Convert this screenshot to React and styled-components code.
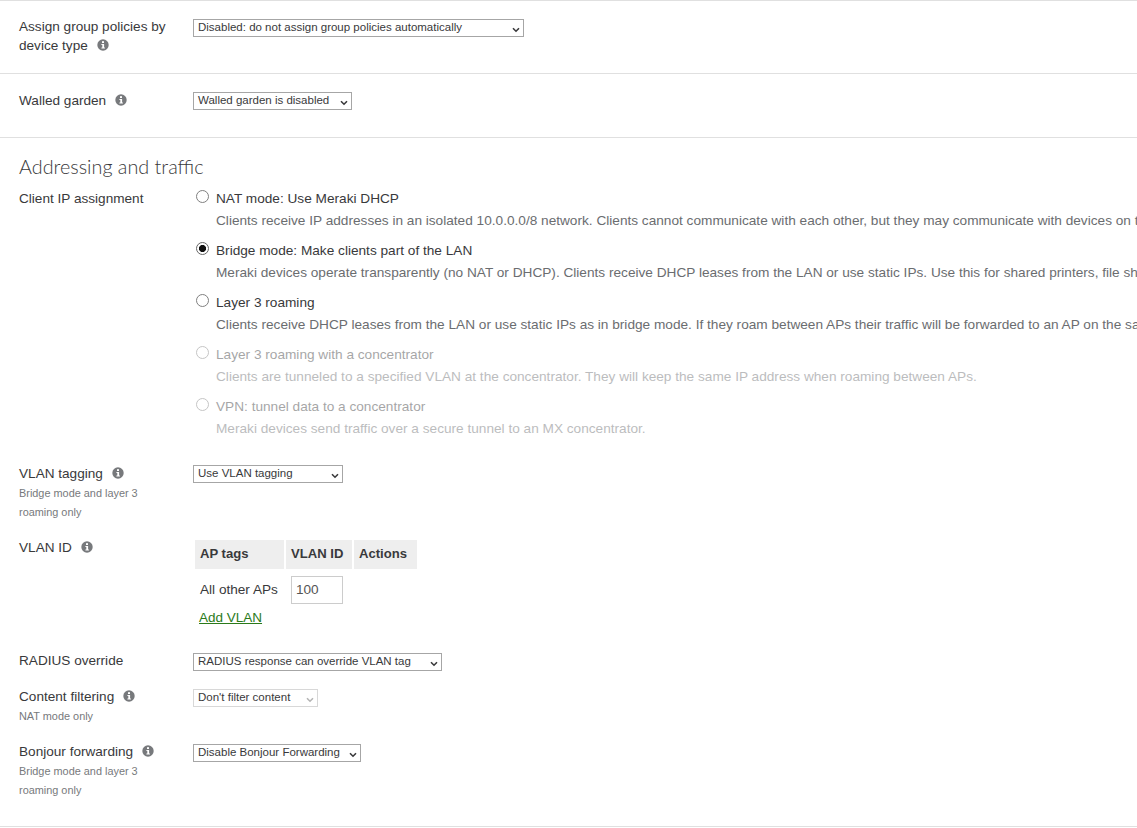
import React from 'react'
import styled, { createGlobalStyle } from 'styled-components'

const GlobalStyle = createGlobalStyle`
	html, body {
		margin: 0;
		padding: 0;
		background: #fff;
	}

	body {
		font-family: "Liberation Sans", Arial, sans-serif;
		font-size: 13.65px;
		color: #39393b;
		overflow: hidden;
	}
`

const InfoIcon = () => (
	<Info viewBox="0 0 12 12" aria-hidden="true">
		<circle cx="6" cy="6" r="5.7" fill="#77797c" />
		<rect x="5" y="2.2" width="2" height="1.8" fill="#fff" />
		<path d="M4.4 5h2.7v3.4h.8v1H4.4v-1h.9V6h-.9z" fill="#fff" />
	</Info>
)

const Select = ({ width, top, disabled, children }) => (
	<SelectBox $width={width} $top={top} $disabled={disabled}>
		<span>{children}</span>
		<svg width="8" height="6" viewBox="0 0 8 6" aria-hidden="true">
			<path d="M1 1.2l3 3 3-3" fill="none" stroke={disabled ? '#b5b5b5' : '#39393b'} strokeWidth="1.6" />
		</svg>
	</SelectBox>
)

const options = [
	{
		title: 'NAT mode: Use Meraki DHCP',
		text: 'Clients receive IP addresses in an isolated 10.0.0.0/8 network. Clients cannot communicate with each other, but they may communicate with devices on the wired LAN if the SSID firewall settings permit.',
	},
	{
		title: 'Bridge mode: Make clients part of the LAN',
		text: 'Meraki devices operate transparently (no NAT or DHCP). Clients receive DHCP leases from the LAN or use static IPs. Use this for shared printers, file sharing, and wireless cameras.',
		checked: true,
	},
	{
		title: 'Layer 3 roaming',
		text: 'Clients receive DHCP leases from the LAN or use static IPs as in bridge mode. If they roam between APs their traffic will be forwarded to an AP on the same subnet.',
	},
	{
		title: 'Layer 3 roaming with a concentrator',
		text: 'Clients are tunneled to a specified VLAN at the concentrator. They will keep the same IP address when roaming between APs.',
		disabled: true,
	},
	{
		title: 'VPN: tunnel data to a concentrator',
		text: 'Meraki devices send traffic over a secure tunnel to an MX concentrator.',
		disabled: true,
	},
]

const App = () => {
	return (
		<Page>
			<GlobalStyle />
			<Section $height={73}>
				<Row>
					<Label $top={-2}>Assign group policies by device type <InfoIcon /></Label>
					<Select width={331}>Disabled: do not assign group policies automatically</Select>
				</Row>
			</Section>
			<Section $height={64}>
				<Row>
					<Label>Walled garden <InfoIcon /></Label>
					<Select width={159}>Walled garden is disabled</Select>
				</Row>
			</Section>
			<Addressing>
				<Heading>Addressing and traffic</Heading>
				<Row $height={276}>
					<Label $top={0}>Client IP assignment</Label>
					<Options>
						{options.map(option => (
							<Option key={option.title} $disabled={option.disabled}>
								<Radio type="radio" name="ip" defaultChecked={option.checked} disabled={option.disabled} />
								<OptionBody>
									<OptionTitle>{option.title}</OptionTitle>
									<OptionText>{option.text}</OptionText>
								</OptionBody>
							</Option>
						))}
					</Options>
				</Row>
				<Row $height={74}>
					<div>
						<Label>VLAN tagging <InfoIcon /></Label>
						<Hint>Bridge mode and layer 3 roaming only</Hint>
					</div>
					<Select width={150}>Use VLAN tagging</Select>
				</Row>
				<Row $height={113}>
					<Label>VLAN ID <InfoIcon /></Label>
					<div>
						<VlanTable>
							<thead>
								<tr>
									<th>AP tags</th>
									<th>VLAN ID</th>
									<th>Actions</th>
								</tr>
							</thead>
							<tbody>
								<tr>
									<td>All other APs</td>
									<td><VlanInput defaultValue="100" /></td>
									<td />
								</tr>
							</tbody>
						</VlanTable>
						<AddLink href="#">Add VLAN</AddLink>
					</div>
				</Row>
				<Row $height={36}>
					<Label>RADIUS override</Label>
					<Select width={249} top={1}>RADIUS response can override VLAN tag</Select>
				</Row>
				<Row $height={55}>
					<div>
						<Label>Content filtering <InfoIcon /></Label>
						<Hint>NAT mode only</Hint>
					</div>
					<Select width={125} top={1} disabled>Don't filter content</Select>
				</Row>
				<Row>
					<div>
						<Label>Bonjour forwarding <InfoIcon /></Label>
						<Hint>Bridge mode and layer 3 roaming only</Hint>
					</div>
					<Select width={168} top={1}>Disable Bonjour Forwarding</Select>
				</Row>
			</Addressing>
		</Page>
	)
}

export default App

const Page = styled.div`
	width: 1137px;
	height: 828px;
	overflow: hidden;
	border-top: 1px solid #e0e0e0;
	box-sizing: border-box;
`

const Section = styled.section`
	height: ${ p => p.$height }px;
	box-sizing: border-box;
	padding: 18px 0 0 19px;
	border-bottom: 1px solid #e0e0e0;
`

const Addressing = styled.section`
	height: 689px;
	box-sizing: border-box;
	padding: 17px 0 0 19px;
	border-bottom: 1px solid #e0e0e0;
`

const Heading = styled.h2`
	margin: 0 0 12px;
	font-family: Lato, sans-serif;
	font-size: 19.8px;
	font-weight: 300;
	line-height: 22px;
	color: #39393b;
`

const Row = styled.div`
	display: grid;
	grid-template-columns: 174px 1fr;
	${ p => p.$height && `height: ${ p.$height }px;` }
`

const Label = styled.div`
	width: 155px;
	margin-top: ${ p => p.$top ?? -1 }px;
	font-size: 13.6px;
	line-height: 19px;
	color: #39393b;
`

const Info = styled.svg`
	width: 12px;
	height: 12px;
	margin-left: 5px;
	vertical-align: -1px;
`

const Hint = styled.div`
	width: 130px;
	margin-top: 1px;
	font-size: 10.9px;
	line-height: 18.5px;
	color: #77797c;
`

const SelectBox = styled.div`
	width: ${ p => p.$width }px;
	height: 18px;
	margin-top: ${ p => p.$top || 0 }px;
	box-sizing: border-box;
	display: flex;
	align-items: center;
	justify-content: space-between;
	padding: 0 3px 2px 4px;
	background: #fff;
	border: 1px solid ${ p => p.$disabled ? '#d8d8d8' : '#a6a6a6' };
	font-size: 11.5px;
	color: #39393b;

	svg {
		margin-top: 5px;
	}
`

const Options = styled.div`
	display: flex;
	flex-direction: column;
	min-width: 0;
	overflow: hidden;
`

const Option = styled.div`
	height: 52px;
	display: flex;
	align-items: flex-start;
	gap: 7px;
	padding-left: 3px;
	opacity: ${ p => p.$disabled ? 0.45 : 1 };
`

const Radio = styled.input`
	appearance: none;
	flex: none;
	width: 13px;
	height: 13px;
	margin: 1px 0 0;
	border: 1px solid #808080;
	border-radius: 50%;
	background: #fff;

	&:checked {
		border-color: #666;
		background: radial-gradient(circle, #111 0 3.2px, #fff 3.9px);
	}
`

const OptionBody = styled.div`
	min-width: 0;
	white-space: nowrap;
`

const OptionTitle = styled.div`
	line-height: 19px;
	color: #39393b;
`

const OptionText = styled.div`
	margin-top: 3px;
	line-height: 19px;
	color: #6b6d70;
`

const VlanTable = styled.table`
	margin-top: 1px;
	border-collapse: separate;
	border-spacing: 2px 0;
	font-size: 13.6px;
	color: #39393b;

	th {
		height: 29px;
		padding: 0 5px 2px;
		background: #eee;
		text-align: left;
		font-size: 13.1px;
		font-weight: 700;
		box-sizing: border-box;
	}

	th:nth-child(1) {
		width: 89px;
	}

	th:nth-child(2) {
		width: 66px;
	}

	th:nth-child(3) {
		width: 63px;
	}

	td {
		height: 41px;
		padding: 0 5px;
	}
`

const VlanInput = styled.input`
	display: block;
	width: 52px;
	height: 28px;
	box-sizing: border-box;
	padding: 0 4px;
	border: 1px solid #ccc;
	font: 13.6px "Liberation Sans", Arial, sans-serif;
	color: #555;
`

const AddLink = styled.a`
	display: inline-block;
	margin: 0 0 0 6px;
	color: #2b7a1a;
	font-size: 13.5px;
`
